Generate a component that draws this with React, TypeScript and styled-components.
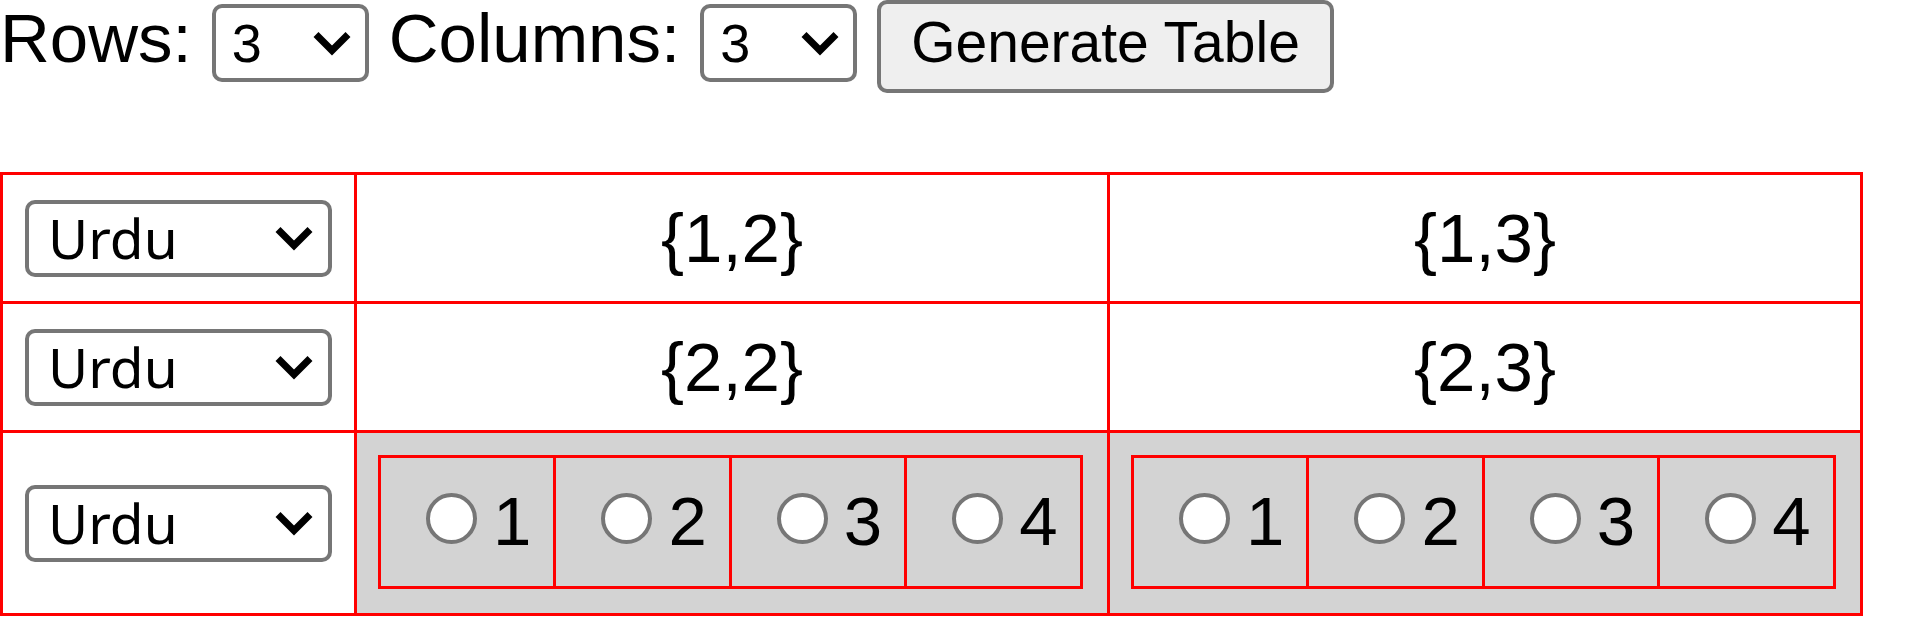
import React from 'react';
import styled, { createGlobalStyle } from 'styled-components';

const GlobalStyle = createGlobalStyle`
  body {
    margin: 0;
    background: #fff;
    color: #000;
    font-family: "Liberation Sans", Arial, sans-serif;
    font-size: 69px;
  }
`;

const Toolbar = styled.div`
  display: flex;
  align-items: flex-start;
  gap: 20px;
  height: 92px;
`;

const Label = styled.span`
  font-size: 69px;
  line-height: 79px;
  margin-top: -1px;
  white-space: nowrap;
`;

const SelectWrap = styled.div<{ $top?: number }>`
  position: relative;
  flex: none;
  margin-top: ${(p) => p.$top ?? 0}px;
`;

const BaseSelect = styled.select`
  appearance: none;
  -webkit-appearance: none;
  display: block;
  box-sizing: border-box;
  margin: 0;
  background: #fff;
  color: #000;
  border: 4px solid #767676;
  border-radius: 10px;
  outline: none;
`;

const CountSelect = styled(BaseSelect)`
  width: 157px;
  height: 78px;
  padding: 0 0 0 16px;
  font-family: "Liberation Sans", Arial, sans-serif;
  font-size: 54px;
`;

const LangSelect = styled(BaseSelect)`
  width: 307px;
  height: 77px;
  padding: 0 0 0 19px;
  font-family: "Noto Sans", "Open Sans", sans-serif;
  font-size: 55px;
  line-height: 60px;
`;

const ChevronIcon = styled.svg<{ $right: number }>`
  position: absolute;
  right: ${(p) => p.$right}px;
  top: 50%;
  transform: translateY(-46%);
  width: 38px;
  height: 25px;
  pointer-events: none;
`;

const Chevron = ({ right }: { right: number }) => (
  <ChevronIcon $right={right} viewBox="0 0 38 25">
    <polyline
      points="3,3 19,19 35,3"
      fill="none"
      stroke="#000"
      strokeWidth="7"
      strokeLinecap="butt"
      strokeLinejoin="miter"
    />
  </ChevronIcon>
);

const GenerateButton = styled.button`
  flex: none;
  margin: 0;
  padding: 5px 30px 14px;
  background: #efefef;
  color: #000;
  border: 4px solid #767676;
  border-radius: 10px;
  font-family: "Liberation Sans", Arial, sans-serif;
  font-size: 57px;
  line-height: normal;
  white-space: nowrap;
`;

const GridTable = styled.table`
  border-collapse: collapse;
  width: 1863px;
  margin-top: 80px;
`;

const Cell = styled.td<{ $shade?: boolean; $first?: boolean }>`
  border: 3px solid #ff0000;
  padding: ${(p) => (p.$shade ? '22px 21px 24px' : '23.5px 22px')};
  background: ${(p) => (p.$shade ? '#d3d3d3' : '#fff')};
  text-align: ${(p) => (p.$shade ? 'left' : 'center')};
  vertical-align: middle;
  width: ${(p) => (p.$first ? '1%' : 'auto')};
  font-size: 69px;
  line-height: 79px;
  white-space: nowrap;
`;

const OptionTable = styled.table`
  border-collapse: collapse;
`;

const OptionCell = styled.td`
  border: 3px solid #ff0000;
  padding: 24px 22px 25px 20px;
`;

const OptionLabel = styled.label`
  display: flex;
  align-items: center;
  font-size: 69px;
  line-height: 79px;
`;

const Radio = styled.input`
  appearance: none;
  -webkit-appearance: none;
  flex: none;
  box-sizing: border-box;
  width: 51px;
  height: 51px;
  margin: 0 16px 7px 25px;
  border: 4px solid #767676;
  border-radius: 50%;
  background: #fff;
`;

const languages = ['Urdu', 'English', 'Arabic', 'Hindi'];
const counts = [1, 2, 3, 4, 5];

const LanguagePicker = () => (
  <SelectWrap>
    <LangSelect defaultValue="Urdu">
      {languages.map((l) => (
        <option key={l}>{l}</option>
      ))}
    </LangSelect>
    <Chevron right={19} />
  </SelectWrap>
);

const RadioGroup = ({ name }: { name: string }) => (
  <OptionTable>
    <tbody>
      <tr>
        {[1, 2, 3, 4].map((n) => (
          <OptionCell key={n}>
            <OptionLabel>
              <Radio type="radio" name={name} value={n} />
              {n}
            </OptionLabel>
          </OptionCell>
        ))}
      </tr>
    </tbody>
  </OptionTable>
);

export default function App() {
  return (
    <>
      <GlobalStyle />
      <Toolbar>
        <Label>Rows:</Label>
        <SelectWrap $top={4}>
          <CountSelect defaultValue="3">
            {counts.map((c) => (
              <option key={c}>{c}</option>
            ))}
          </CountSelect>
          <Chevron right={18} />
        </SelectWrap>
        <Label>Columns:</Label>
        <SelectWrap $top={4}>
          <CountSelect defaultValue="3">
            {counts.map((c) => (
              <option key={c}>{c}</option>
            ))}
          </CountSelect>
          <Chevron right={18} />
        </SelectWrap>
        <GenerateButton>Generate Table</GenerateButton>
      </Toolbar>
      <GridTable>
        <tbody>
          <tr>
            <Cell $first><LanguagePicker /></Cell>
            <Cell>{'{1,2}'}</Cell>
            <Cell>{'{1,3}'}</Cell>
          </tr>
          <tr>
            <Cell $first><LanguagePicker /></Cell>
            <Cell>{'{2,2}'}</Cell>
            <Cell>{'{2,3}'}</Cell>
          </tr>
          <tr>
            <Cell $first><LanguagePicker /></Cell>
            <Cell $shade><RadioGroup name="r3c2" /></Cell>
            <Cell $shade><RadioGroup name="r3c3" /></Cell>
          </tr>
        </tbody>
      </GridTable>
    </>
  );
}
